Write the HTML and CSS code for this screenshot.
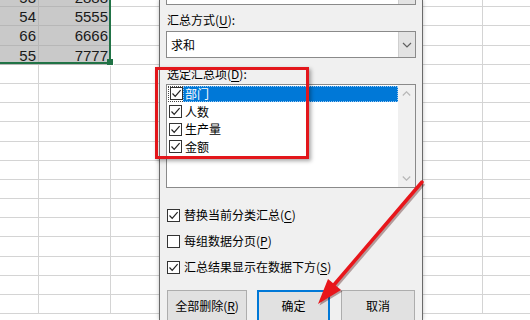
FILE: index.html
```html
<!DOCTYPE html>
<html lang="zh-CN">
<head>
<meta charset="utf-8">
<title>分类汇总</title>
<link rel="stylesheet" href="styles.css">
</head>
<body>
<div class="sheet">
  <div class="row"><div class="cell a sel">53</div><div class="cell b sel">2888</div><div class="cell c"></div><div class="cell d"></div><div class="cell e"></div></div>
  <div class="row"><div class="cell a sel">54</div><div class="cell b sel">5555</div><div class="cell c"></div><div class="cell d"></div><div class="cell e"></div></div>
  <div class="row"><div class="cell a sel">66</div><div class="cell b sel">6666</div><div class="cell c"></div><div class="cell d"></div><div class="cell e"></div></div>
  <div class="row"><div class="cell a sel">55</div><div class="cell b sel">7777</div><div class="cell c"></div><div class="cell d"></div><div class="cell e"></div></div>
  <div class="row"><div class="cell a"></div><div class="cell b"></div><div class="cell c"></div><div class="cell d"></div><div class="cell e"></div></div>
  <div class="row"><div class="cell a"></div><div class="cell b"></div><div class="cell c"></div><div class="cell d"></div><div class="cell e"></div></div>
  <div class="row"><div class="cell a"></div><div class="cell b"></div><div class="cell c"></div><div class="cell d"></div><div class="cell e"></div></div>
  <div class="row"><div class="cell a"></div><div class="cell b"></div><div class="cell c"></div><div class="cell d"></div><div class="cell e"></div></div>
  <div class="row"><div class="cell a"></div><div class="cell b"></div><div class="cell c"></div><div class="cell d"></div><div class="cell e"></div></div>
  <div class="row"><div class="cell a"></div><div class="cell b"></div><div class="cell c"></div><div class="cell d"></div><div class="cell e"></div></div>
  <div class="row"><div class="cell a"></div><div class="cell b"></div><div class="cell c"></div><div class="cell d"></div><div class="cell e"></div></div>
  <div class="row"><div class="cell a"></div><div class="cell b"></div><div class="cell c"></div><div class="cell d"></div><div class="cell e"></div></div>
  <div class="row"><div class="cell a"></div><div class="cell b"></div><div class="cell c"></div><div class="cell d"></div><div class="cell e"></div></div>
  <div class="row"><div class="cell a"></div><div class="cell b"></div><div class="cell c"></div><div class="cell d"></div><div class="cell e"></div></div>
  <div class="row"><div class="cell a"></div><div class="cell b"></div><div class="cell c"></div><div class="cell d"></div><div class="cell e"></div></div>
  <div class="row"><div class="cell a"></div><div class="cell b"></div><div class="cell c"></div><div class="cell d"></div><div class="cell e"></div></div>
  <div class="row"><div class="cell a"></div><div class="cell b"></div><div class="cell c"></div><div class="cell d"></div><div class="cell e"></div></div>
</div>
<div class="sel-border"></div>
<div class="sel-handle"></div>

<div class="dialog">
  <div class="combo combo-top"><div class="combo-text"></div><div class="combo-btn"></div></div>
  <div class="label">汇总方式(<u>U</u>):</div>
  <div class="combo combo-main">
    <div class="combo-text">求和</div>
    <div class="combo-btn"><svg width="10" height="6" viewBox="0 0 10 6"><polyline points="1,1 5,5 9,1" fill="none" stroke="#606060" stroke-width="1.2"/></svg></div>
  </div>
  <div class="label label2">选定汇总项(<u>D</u>):</div>
  <div class="listbox">
    <div class="items">
      <div class="item focused">
        <span class="cb-wrap"><span class="cb"><svg width="11" height="11" viewBox="0 0 11 11"><polyline points="1.5,5.5 4.2,8.3 9.6,2.2" fill="none" stroke="#222" stroke-width="1.2"/></svg></span></span>
        <span class="item-text selected">部门</span>
      </div>
      <div class="item">
        <span class="cb-wrap"><span class="cb"><svg width="11" height="11" viewBox="0 0 11 11"><polyline points="1.5,5.5 4.2,8.3 9.6,2.2" fill="none" stroke="#222" stroke-width="1.2"/></svg></span></span>
        <span class="item-text">人数</span>
      </div>
      <div class="item">
        <span class="cb-wrap"><span class="cb"><svg width="11" height="11" viewBox="0 0 11 11"><polyline points="1.5,5.5 4.2,8.3 9.6,2.2" fill="none" stroke="#222" stroke-width="1.2"/></svg></span></span>
        <span class="item-text">生产量</span>
      </div>
      <div class="item">
        <span class="cb-wrap"><span class="cb"><svg width="11" height="11" viewBox="0 0 11 11"><polyline points="1.5,5.5 4.2,8.3 9.6,2.2" fill="none" stroke="#222" stroke-width="1.2"/></svg></span></span>
        <span class="item-text">金额</span>
      </div>
    </div>
    <div class="scrollbar">
      <div class="sb-arrow"><svg width="9" height="5" viewBox="0 0 9 5"><polyline points="0.8,4.5 4.5,0.8 8.2,4.5" fill="none" stroke="#b8b8b8" stroke-width="1.2"/></svg></div>
      <div class="sb-arrow"><svg width="9" height="5" viewBox="0 0 9 5"><polyline points="0.8,0.5 4.5,4.2 8.2,0.5" fill="none" stroke="#b8b8b8" stroke-width="1.2"/></svg></div>
    </div>
  </div>
  <div class="options">
    <div class="opt"><span class="cb"><svg width="11" height="11" viewBox="0 0 11 11"><polyline points="1.5,5.5 4.2,8.3 9.6,2.2" fill="none" stroke="#222" stroke-width="1.2"/></svg></span><span>替换当前分类汇总(<u>C</u>)</span></div>
    <div class="opt"><span class="cb"></span><span>每组数据分页(<u>P</u>)</span></div>
    <div class="opt"><span class="cb"><svg width="11" height="11" viewBox="0 0 11 11"><polyline points="1.5,5.5 4.2,8.3 9.6,2.2" fill="none" stroke="#222" stroke-width="1.2"/></svg></span><span>汇总结果显示在数据下方(<u>S</u>)</span></div>
  </div>
  <div class="buttons">
    <div class="btn btn-del">全部删除(<u>R</u>)</div>
    <div class="btn btn-ok">确定</div>
    <div class="btn btn-cancel">取消</div>
  </div>
</div>

<div class="redbox"></div>
<svg class="arrow" width="530" height="320" viewBox="0 0 530 320">
  <g opacity="0.35" transform="translate(1.5,1.5)">
    <line x1="422" y1="182" x2="333" y2="286" stroke="#400" stroke-width="4"/>
    <polygon points="318,304 328,279 341,290" fill="#400"/>
  </g>
  <line x1="422" y1="182" x2="333" y2="286" stroke="#e8161b" stroke-width="3.5" stroke-linecap="round"/>
  <polygon points="318,304 328,279 341,290" fill="#e8161b"/>
</svg>
</body>
</html>
```

FILE: styles.css
```css
* { box-sizing: border-box; }
html, body { margin: 0; padding: 0; }
body {
  width: 530px;
  height: 320px;
  overflow: hidden;
  position: relative;
  background: #fff;
  font-family: "Noto Sans CJK SC", "Noto Sans", sans-serif;
  font-size: 12px;
  color: #000;
}

/* spreadsheet */
.sheet {
  margin-top: -12px;
  display: flex;
  flex-direction: column;
}
.row {
  display: flex;
  height: 19.2px;
  flex: none;
}
.cell {
  height: 19.2px;
  border-right: 1px solid #d4d4d4;
  border-bottom: 1px solid #d4d4d4;
  font-family: "Liberation Sans", Arial, sans-serif;
  font-size: 15px;
  line-height: 19px;
  text-align: right;
  padding-right: 2px;
  color: #1a1a1a;
  flex: none;
}
.cell.a { width: 39px; }
.cell.b { width: 72px; }
.cell.c { width: 186px; }
.cell.d { width: 186px; }
.cell.e { width: 60px; }
.cell.sel {
  background: #c9c9c9;
  border-color: #b7b7b7;
}
.sel-border {
  position: absolute;
  left: -4px;
  top: -10px;
  width: 115px;
  height: 74px;
  border-right: 2px solid #217346;
  border-bottom: 2px solid #217346;
}
.sel-handle {
  position: absolute;
  left: 107px;
  top: 59px;
  width: 7px;
  height: 7px;
  background: #217346;
  border: 1px solid #fff;
  border-top: none;
  border-left: none;
}

/* dialog */
.dialog {
  position: absolute;
  left: 159px;
  top: 0;
  width: 264px;
  height: 320px;
  overflow: hidden;
  background: #f0f0f0;
  border-left: 1px solid #6a6a6a;
  border-right: 1px solid #6a6a6a;
  box-shadow: 0 0 4px rgba(0,0,0,0.25);
  padding: 0 6px 0 6px;
  display: flex;
  flex-direction: column;
}
.combo {
  display: flex;
  background: #fff;
  border: 1px solid #8a8a8a;
  width: 250px;
  flex: none;
}
.combo-top {
  height: 25px;
  margin-top: -20px;
}
.combo-main {
  height: 27px;
  margin-top: 3px;
}
.combo-text {
  flex: 1;
  padding-left: 4px;
  line-height: 25px;
  font-size: 12px;
}
.combo-btn {
  width: 17px;
  background: #e3e3e3;
  border-left: 1px solid #cfcfcf;
  display: flex;
  align-items: center;
  justify-content: center;
}
.label {
  margin-top: 7px;
  line-height: 16px;
  height: 16px;
  padding-left: 1px;
  flex: none;
}
.label2 { margin-top: 8px; }
u { text-decoration: underline; text-underline-offset: 2px; }

.listbox {
  margin-top: 2px;
  height: 104px;
  width: 250px;
  background: #fff;
  border: 1px solid #8a8a8a;
  display: flex;
  flex: none;
}
.items {
  flex: 1;
  display: flex;
  flex-direction: column;
}
.item {
  height: 17.7px;
  display: flex;
  align-items: center;
  padding-left: 1px;
  flex: none;
}
.cb-wrap {
  width: 15px;
  height: 16px;
  display: flex;
  align-items: center;
  justify-content: center;
  border: 1px dotted transparent;
  flex: none;
}
.item.focused .cb-wrap { border-color: #444; border-right: none; }
.cb {
  width: 13px;
  height: 13px;
  border: 1px solid #333;
  background: #fff;
  display: flex;
  align-items: center;
  justify-content: center;
  flex: none;
}
.item-text {
  flex: 1;
  height: 16px;
  line-height: 16px;
  padding-left: 2px;
}
.item-text.selected {
  background: #0078d7;
  color: #fff;
  outline: 1px dotted #9cc8f0;
  outline-offset: -1px;
}
.scrollbar {
  width: 17px;
  background: #f0f0f0;
  display: flex;
  flex-direction: column;
  justify-content: space-between;
}
.sb-arrow {
  height: 17px;
  display: flex;
  align-items: center;
  justify-content: center;
}

.options {
  margin-top: 19px;
  display: flex;
  flex-direction: column;
  gap: 10px;
  flex: none;
}
.opt {
  display: flex;
  align-items: center;
  gap: 4px;
  height: 16px;
  line-height: 16px;
  padding-left: 1px;
}

.buttons {
  margin-top: 15px;
  display: flex;
  padding-left: 1px;
  flex: none;
}
.btn {
  height: 32px;
  line-height: 30px;
  text-align: center;
  background: #e1e1e1;
  border: 1px solid #adadad;
  flex: none;
}
.btn-del { width: 80px; }
.btn-ok {
  width: 73px;
  margin-left: 10px;
  border: 2px solid #0078d7;
  line-height: 28px;
}
.btn-cancel { width: 74px; margin-left: 11px; }

/* annotations */
.redbox {
  position: absolute;
  left: 155px;
  top: 67px;
  width: 154px;
  height: 92px;
  border: 3px solid #e3161b;
  box-shadow: 2px 2px 4px rgba(0,0,0,0.35);
}
.arrow {
  position: absolute;
  left: 0;
  top: 0;
  pointer-events: none;
}
```
